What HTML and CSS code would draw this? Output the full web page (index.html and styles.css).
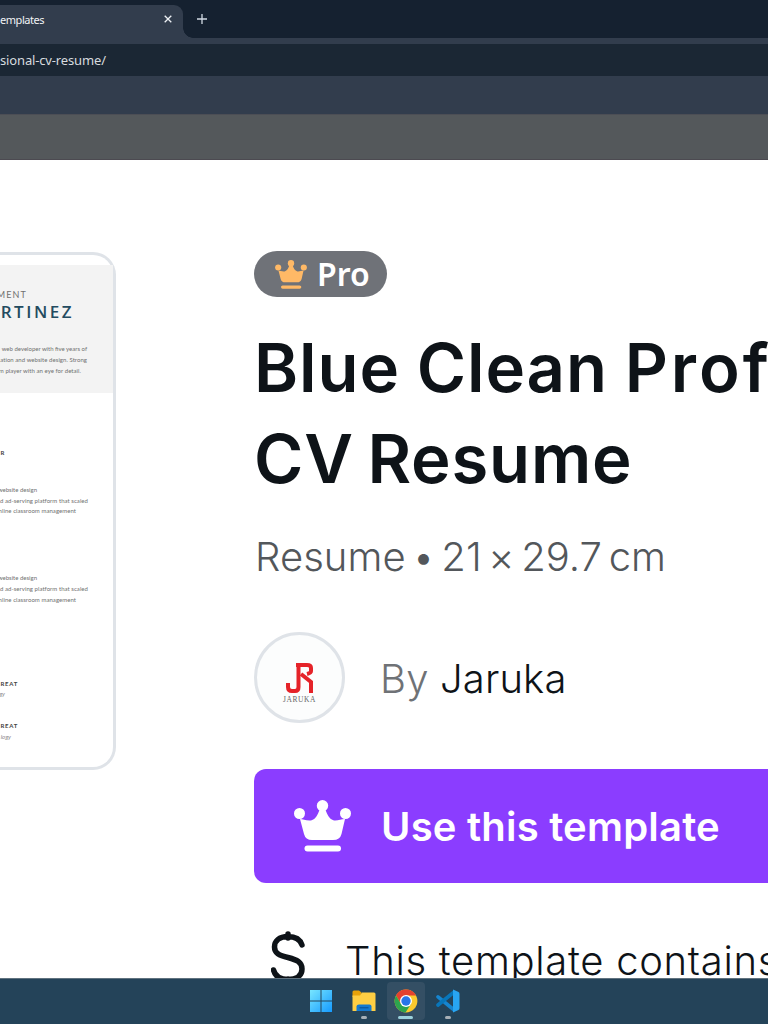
FILE: index.html
```html
<!DOCTYPE html>
<html lang="en">
<head>
<meta charset="utf-8">
<title>Blue Clean Professional CV Resume</title>
<link rel="stylesheet" href="styles.css">
</head>
<body>
<svg class="defs" width="0" height="0">
  <symbol id="crown" viewBox="0 0 57 52">
    <path d="M6 19 C9 19 12 21 17 20.500 C22 19 23.500 15 25.500 10 H31.500 C33.500 15 35 19 40 20.500 C44 21 47 19 51 19 L47.500 34 Q46 40 39 40 H18 Q11.500 40 10 34Z"/>
    <circle cx="5.500" cy="13.500" r="5.500"/><circle cx="28.500" cy="5.700" r="5.700"/><circle cx="51.500" cy="13.500" r="5.500"/>
    <rect x="10.500" y="45.500" width="36.500" height="6" rx="3"/>
  </symbol>
</svg>
<header class="tabs">
  <div class="tab"><span>emplates</span><svg class="close" viewBox="0 0 8 8"><path d="M.7.7l6.600 6.600M7.300.7L.7 7.300"/></svg></div>
  <svg class="plus" viewBox="0 0 10 10"><path d="M5 0v10M0 5h10"/></svg>
</header>
<div class="address"><span>sional-cv-resume/</span></div>
<div class="bookmarks"></div>
<div class="scrim"></div>
<main class="page">
  <section class="preview">
    <div class="summary">
      <div class="line role">MENT</div>
      <div class="line name">RTINEZ</div>
      <div class="line w87 intro">web developer with five years of</div>
      <div class="line w87 row">ation and website design. Strong</div>
      <div class="line w81 row">m player with an eye for detail.</div>
    </div>
    <div class="line bold w4 job">R</div>
    <div class="line w37 duties">website design</div>
    <div class="line w88 row">d ad-serving platform that scaled</div>
    <div class="line w76 row">nline classroom management</div>
    <div class="line w37 more">website design</div>
    <div class="line w88 row">d ad-serving platform that scaled</div>
    <div class="line w76 row">nline classroom management</div>
    <div class="line bold w18 school">REAT</div>
    <div class="line italic w4">gy</div>
    <div class="line bold w18 school-next">REAT</div>
    <div class="line italic w11">logy</div>
  </section>
  <section class="details">
    <div class="badge"><svg class="badge-crown"><use href="#crown"/></svg><span>Pro</span></div>
    <h1><span class="title-top">Blue Clean <span class="title-wide">Professional</span></span><br><span class="title-end">CV Resume</span></h1>
    <p class="meta">Resume • 21 × 29.7 cm</p>
    <div class="author">
      <div class="avatar">
        <svg class="logo" viewBox="0 0 27 30"><path d="M10 2H21Q25 2 25 5V8Q25 10 21 11M15 11L25 19V30"/><path d="M12.500 4V24Q12.500 28 9 28H6Q2 28 2 24V20"/></svg>
        <span>JARUKA</span>
      </div>
      <p class="by"><span>By</span> Jaruka</p>
    </div>
    <div class="button"><svg class="button-crown"><use href="#crown"/></svg><span>Use this template</span></div>
    <div class="notice">
      <svg class="dollar" viewBox="0 0 34 58"><path d="M31 14C29 8 24 5.500 17 5.500C8 5.500 3.500 10 3.500 16C3.500 22 8 24.500 17 26.500C26 29 31 31 31 38C31 45 25 48.500 17 48.500C9 48.500 4 45 2.500 39M17 3V7M17 48V54"/></svg>
      <span>This template contains paid elements</span>
    </div>
  </section>
</main>
<footer class="taskbar">
  <div class="app"><svg width="24" height="24" viewBox="0 0 24 24"><defs><linearGradient id="win" x2="1" y2="1"><stop stop-color="#78e6ff"/><stop offset="1" stop-color="#159aff"/></linearGradient></defs><path fill="url(#win)" d="M0 1h10.500v10.500H0zM11.500 1H22v10.500H11.500zM0 12.500h10.500V23H0zM11.500 12.500H22V23H11.500z"/></svg></div>
  <div class="app"><svg width="24" height="24" viewBox="0 0 24 24"><path fill="#e8a20a" d="M.5 3Q.5 1.500 2 1.500H7L9.500 3.500V8H.5z"/><path fill="#ffce43" d="M.5 6.500H8L10 3.500H22Q23.500 3.500 23.500 5V22H.5z"/><path fill="#1479cf" d="M4.500 22V17.500Q4.500 15.500 7 15.500H17.500Q19.500 15.500 19.500 17.500V22z"/><path stroke="#0a4d91" d="M7.500 18.800h9"/></svg><i></i></div>
  <div class="app active"><svg width="24" height="24" viewBox="0 0 24 24"><circle cx="12" cy="12" r="11.400" fill="#fbc92d"/><path fill="#e3412f" d="M2 6.500A11.400 11.400 0 0 1 22 6.500H12L7 15z"/><path fill="#2da44e" d="M2 6.500A11.400 11.400 0 0 0 11.500 23.400L17 15L7 15z"/><circle cx="12" cy="12" r="6" fill="#fff"/><circle cx="12" cy="12" r="4.700" fill="#2875e8"/></svg><i></i></div>
  <div class="app"><svg width="24" height="24" viewBox="0 0 24 24"><path d="M2 7.800L17.500 20.500" stroke="#1685cf" stroke-width="3.600" stroke-linecap="round"/><path d="M2 16L17.500 3.500" stroke="#0876ba" stroke-width="3.600" stroke-linecap="round"/><path fill="#28a5f2" d="M17 .5L22.500 3Q23.500 3.500 23.500 5V19Q23.500 20.500 22.500 21L17 23.500z"/></svg><i></i></div>
</footer>
</body>
</html>
```
FILE: styles.css
```css
* { box-sizing: border-box; }
body { margin: 0; width: 768px; height: 1024px; overflow: hidden; display: flex; flex-direction: column; background: #fff; font-family: Inter, "Noto Sans", sans-serif; color: #0e1318; }
.defs { position: absolute; }
svg { display: block; flex: none; }
p, h1 { margin: 0; white-space: nowrap; font-weight: normal; }

.tabs { flex: none; height: 44px; border-bottom: 6px solid #323d4d; display: flex; padding-top: 5px; background: #152130; }
.tab { position: relative; width: 183px; height: 33px; background: #323d4d; border-top-right-radius: 9px; color: #f1f3f5; font: 11px/30px "Noto Sans", sans-serif; display: flex; letter-spacing: -.45px; justify-content: space-between; }
.tab::after { content: ""; position: absolute; left: 183px; bottom: 0; width: 10px; height: 10px; background: radial-gradient(circle at 100% 0, #152130 9.500px, #323d4d 10px); }
.close { width: 8px; height: 8px; margin: 10px 11px 0 0; stroke: #eef1f5; stroke-width: 1.300; }
.plus { width: 10px; height: 10px; margin: 9px 0 0 14px; stroke: #d2dae4; stroke-width: 1.300; }
.address { flex: none; height: 32px; background: #1b2734; font: 13px/32px "Noto Sans", sans-serif; color: #d7dbdf; letter-spacing: -.15px; }
.bookmarks { flex: none; height: 38px; background: #323d4d; }
.scrim { flex: none; height: 46px; background: #54585b; border-top: 1px solid #4c4e55; border-bottom: 1px solid #4c4a51; }

.page { flex: none; height: 818px; width: 768px; overflow: hidden; display: flex; gap: 138px; }
.preview { flex: none; width: 116px; height: 518px; margin-top: 92px; border: 3px solid #dfe3e8; border-left: 0; border-radius: 0 23px 23px 0; padding-top: 10px; font: 6px/10.800px Lato, sans-serif; color: #707070; }
.summary { height: 128px; background: #f3f3f3; padding-top: 24px; }
.line { display: flex; justify-content: flex-end; white-space: nowrap; height: 10.800px; }
.row { letter-spacing: .05px; }
.w87 { width: 87px; } .w81 { width: 81px; } .w37 { width: 37px; } .w88 { width: 88px; } .w76 { width: 76px; }
.w4 { width: 5px; } .w18 { width: 18px; } .w11 { width: 11px; }
.role { width: 27px; height: 12px; font: 9px/12px Lato, sans-serif; letter-spacing: 1.100px; }
.name { width: 74px; height: 22px; font: 600 17px/22px "Open Sans", sans-serif; letter-spacing: 2.500px; color: #234b60; }
.intro { margin-top: 21px; }
.bold { font-weight: 700; letter-spacing: .7px; color: #444; }
.italic { font-style: italic; color: #888; }
.job { margin-top: 55px; }
.duties { margin-top: 26px; }
.more { margin-top: 56px; }
.school { margin-top: 73px; }
.school-next { margin-top: 21px; }

.details { flex: none; width: 1000px; padding-top: 91px; }
.badge { width: 133px; height: 46px; border-radius: 23px; background: #6f7278; display: flex; align-items: center; padding-left: 21px; gap: 10px; color: #fff; font-size: 32px; font-weight: 650; line-height: 46px; font-family: "Noto Sans", sans-serif; }
.badge-crown { width: 32px; height: 29px; fill: #ffb966; }
h1 { margin-top: 25px; height: 182px; font: 600 67px/91px Inter, sans-serif; }
.title-top { letter-spacing: .9px; word-spacing: -1px; }
.title-wide { letter-spacing: 3px; }
.title-end { letter-spacing: .8px; word-spacing: -4px; }
.meta { margin-top: 18px; height: 70px; font-size: 40px; line-height: 70px; font-weight: 300; color: #53575b; letter-spacing: .05px; word-spacing: -4.700px; padding-left: 1px; }
.author { margin-top: 40px; height: 91px; display: flex; align-items: center; gap: 35px; }
.avatar { width: 91px; height: 91px; border: 3px solid #dfe3e8; border-radius: 50%; background: #fcfdfd; display: flex; flex-direction: column; align-items: center; padding-top: 28px; font: 7.500px/9px "Liberation Serif", serif; letter-spacing: .6px; color: #666; }
.logo { width: 27px; height: 30px; margin-bottom: 2px; fill: none; stroke: #e52329; stroke-width: 4; }
.by { font-size: 40px; line-height: 60px; font-weight: 300; padding-top: 2px; letter-spacing: .15px; }
.by span { color: #6f7276; }
.button { margin-top: 46px; height: 114px; border-radius: 12px; background: #8b3dff; display: flex; align-items: center; padding-left: 40px; gap: 30px; color: #fff; font: 600 40px/114px Inter, sans-serif; letter-spacing: .2px; }
.button span { padding-top: 2px; }
.button-crown { width: 57px; height: 52px; fill: #fff; }
.notice { margin-top: 48px; display: flex; padding-left: 17px; gap: 40px; font-size: 40px; line-height: 60px; font-weight: 300; white-space: nowrap; letter-spacing: .7px; }
.dollar { width: 34px; height: 58px; fill: none; stroke: #0e1318; stroke-width: 5.500; stroke-linecap: round; }

.taskbar { flex: none; height: 46px; border-top: 1px solid #60727f; background: #244359; display: flex; justify-content: center; gap: 4px; padding: 3px 0 0 1px; }
.app { position: relative; width: 38px; height: 38px; border-radius: 4px; display: flex; align-items: center; justify-content: center; }
.active { background: #344f64; }
.app i { position: absolute; bottom: 1px; width: 6px; height: 3px; border-radius: 2px; background: #a7b0b7; }
.active i { width: 15px; background: #9bd1dc; }
```
